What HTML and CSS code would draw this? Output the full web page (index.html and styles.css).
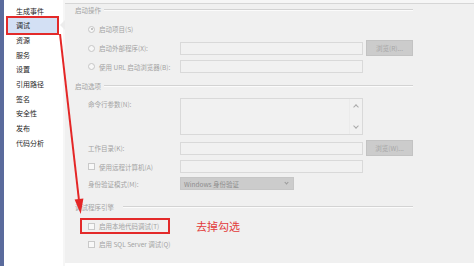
FILE: index.html
```html
<!DOCTYPE html>
<html lang="zh-CN">
<head>
<meta charset="utf-8">
<title>调试</title>
<link rel="stylesheet" href="styles.css">
</head>
<body>
<div class="page">
  <div class="strip"></div>
  <nav class="sidebar">
    <div class="nav-item">生成事件</div>
    <div class="nav-item active">调试<span class="notch"></span></div>
    <div class="nav-item">资源</div>
    <div class="nav-item">服务</div>
    <div class="nav-item">设置</div>
    <div class="nav-item">引用路径</div>
    <div class="nav-item">签名</div>
    <div class="nav-item">安全性</div>
    <div class="nav-item">发布</div>
    <div class="nav-item">代码分析</div>
  </nav>
  <main class="content">
    <div class="topbar"></div>

    <div class="group-head g1"><span>启动操作</span><i class="rule"></i></div>
    <div class="row r1"><span class="opt"><span class="radio on"></span>启动项目(S)</span></div>
    <div class="row r2">
      <span class="opt"><span class="radio"></span>启动外部程序(X):</span>
      <span class="textbox"></span>
      <span class="btn">浏览(R)...</span>
    </div>
    <div class="row r3">
      <span class="opt"><span class="radio"></span>使用 URL 启动浏览器(B):</span>
      <span class="textbox"></span>
    </div>

    <div class="group-head g2"><span>启动选项</span><i class="rule"></i></div>
    <div class="row r4">
      <span class="lbl top">命令行参数(N):</span>
      <span class="textarea"><span class="sb"><span class="up"></span><span class="down"></span></span></span>
    </div>
    <div class="row r5">
      <span class="lbl">工作目录(K):</span>
      <span class="textbox"></span>
      <span class="btn">浏览(W)...</span>
    </div>
    <div class="row r6">
      <span class="opt"><span class="check"></span>使用远程计算机(A)</span>
      <span class="textbox"></span>
    </div>
    <div class="row r7">
      <span class="lbl">身份验证模式(M):</span>
      <span class="select">Windows 身份验证<span class="caret"></span></span>
    </div>

    <div class="group-head g3"><span>调试程序引擎</span><i class="rule"></i></div>
    <div class="row r8">
      <span class="hl"><span class="check"></span>启用本地代码调试(T)</span>
      <span class="note">去掉勾选</span>
    </div>
    <div class="row r9"><span class="opt"><span class="check"></span>启用 SQL Server 调试(Q)</span></div>
  </main>
  <svg class="arrow" width="474" height="266" viewBox="0 0 474 266">
    <line x1="60" y1="34" x2="78.9" y2="199.5" stroke="#e42626" stroke-width="2"/>
    <polygon points="80.7,214 83.4,198.6 74.6,199.6" fill="#e42626"/>
  </svg>
</div>
</body>
</html>
```

FILE: styles.css
```css
html, body {
  margin: 0;
  padding: 0;
  background: #ffffff;
}
body {
  font-family: "Noto Sans CJK SC", "Noto Sans", sans-serif;
}
.page {
  position: relative;
  width: 474px;
  height: 266px;
  display: flex;
  overflow: hidden;
}
.strip {
  width: 4px;
  background: #5a6b9c;
  flex: none;
}
.sidebar {
  width: 59px;
  flex: none;
  background: #ffffff;
  padding-top: 3.6px;
  border-right: 2px solid #f6f6f6;
  box-sizing: content-box;
}
.nav-item {
  position: relative;
  height: 14.7px;
  line-height: 14.7px;
  font-size: 7px;
  color: #1e1e1e;
  padding-left: 12px;
  white-space: nowrap;
}
.nav-item.active {
  margin: 0 6px 0 4px;
  padding-left: 8px;
  background: #d3e0f4;
  outline: 2px solid #e32a2a;
}
.notch {
  position: absolute;
  right: -8px;
  top: 2px;
  width: 0;
  height: 0;
  border-top: 5px solid transparent;
  border-bottom: 5px solid transparent;
  border-right: 5px solid #ececec;
}
.content {
  flex: 1;
  height: 263px;
  background: #f0f0f0;
  padding: 0 64px 0 10px;
  display: flex;
  flex-direction: column;
  font-size: 6.5px;
  color: #a3a3a3;
}
.topbar {
  height: 3px;
  margin: 0 -64px 0 -10px;
  background: #f6f6f6;
  border-bottom: 1px solid #d6d6d6;
  flex: none;
}
.group-head {
  height: 10px;
  display: flex;
  align-items: center;
  gap: 3px;
  flex: none;
  white-space: nowrap;
}
.rule {
  flex: 1;
  height: 0;
  border-top: 1px solid #d3d3d3;
  border-bottom: 1px solid #fbfbfb;
}
.g1 { margin-top: 1px; }
.g2 { margin-top: 7px; }
.g3 { margin-top: 12px; }
.g3 .rule { margin-left: 6px; }

.row {
  display: grid;
  grid-template-columns: 89px 183px 47px;
  column-gap: 3px;
  align-items: center;
  padding-left: 13px;
  flex: none;
  white-space: nowrap;
}
.r1 { margin-top: 7px; height: 14px; }
.r2 { margin-top: 4px; height: 16px; }
.r3 { margin-top: 3px; height: 15px; }
.r4 { margin-top: 7px; height: 37px; align-items: stretch; }
.r5 { margin-top: 5px; height: 16px; }
.r6 { margin-top: 3px; height: 15px; }
.r7 { margin-top: 3px; height: 13px; }
.r8 { margin-top: 6px; height: 16px; display: flex; padding-left: 5px; }
.r9 { margin-top: 2px; height: 16px; }

.opt {
  display: flex;
  align-items: center;
  gap: 4px;
}
.lbl.top {
  padding-top: 1px;
}
.radio {
  width: 5px;
  height: 5px;
  border: 1px solid #c6c6c6;
  border-radius: 50%;
  background: #f7f7f7;
  position: relative;
  flex: none;
}
.radio.on::after {
  content: "";
  position: absolute;
  left: 1.5px;
  top: 1.5px;
  width: 2px;
  height: 2px;
  border-radius: 50%;
  background: #b0b0b0;
}
.check {
  width: 5px;
  height: 5px;
  border: 1px solid #c9c9c9;
  background: #f8f8f8;
  flex: none;
}
.textbox {
  height: 11px;
  border: 1px solid #d9d9d9;
  background: #f1f1f1;
}
.textarea {
  border: 1px solid #d9d9d9;
  background: #f1f1f1;
  display: flex;
  justify-content: flex-end;
}
.sb {
  width: 12px;
  border-left: 1px solid #ebebeb;
  display: flex;
  flex-direction: column;
  justify-content: space-between;
  align-items: center;
  padding: 4px 0 4px;
}
.up, .down {
  width: 3px;
  height: 3px;
  border-left: 1px solid #a9a9a9;
  border-top: 1px solid #a9a9a9;
}
.up { transform: rotate(45deg); margin-top: 2px; }
.down { transform: rotate(225deg); margin-bottom: 2px; }
.btn {
  height: 14px;
  border: 1px solid #c3c3c3;
  background: #cccccc;
  color: #a7a7a7;
  display: flex;
  align-items: center;
  justify-content: center;
}
.select {
  width: 114px;
  height: 13px;
  box-sizing: border-box;
  border: 1px solid #c6c6c6;
  background: #cccccc;
  color: #8c8c8c;
  padding-left: 3px;
  display: flex;
  align-items: center;
  justify-content: space-between;
  font-size: 6.5px;
}
.caret {
  width: 2px;
  height: 2px;
  border-right: 1px solid #9a9a9a;
  border-bottom: 1px solid #9a9a9a;
  transform: rotate(45deg);
  margin: 0 5px 2px 0;
}
.hl {
  width: 90px;
  height: 16px;
  box-sizing: border-box;
  border: 2px solid #e32a2a;
  display: flex;
  align-items: center;
  gap: 4px;
  padding-left: 6px;
}
.note {
  margin-left: 23px;
  font-size: 11px;
  color: #e23a3a;
  line-height: 16px;
}
.arrow {
  position: absolute;
  left: 0;
  top: 0;
  pointer-events: none;
}
```
